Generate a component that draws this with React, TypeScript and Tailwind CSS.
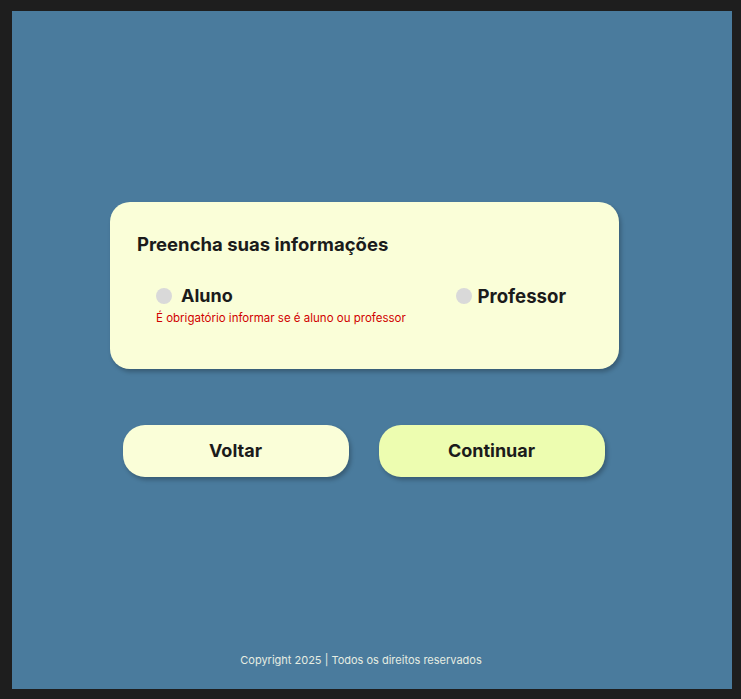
import { useState } from "react";

type Role = "aluno" | "professor" | null;

const font = { fontFamily: "Inter, 'Noto Sans', sans-serif" };

function Radio({ label, checked, onClick, gap, size }: { label: string; checked: boolean; onClick(): void; gap: string; size: string }) {
	return (
		<button type="button" onClick={onClick} className={`flex items-center ${gap}`}>
			<span
				className={`block h-4 w-4 rounded-full ${checked ? "bg-[#4a7b9d]" : "bg-[#d9d9d9]"}`}
			/>
			<span className={`${size} leading-7 font-bold text-[#1b1b1b]`}>{label}</span>
		</button>
	);
}

export default function App() {
	const [role, setRole] = useState<Role>(null);

	return (
		<div className="h-[699px] w-[741px] bg-[#1e1e1e] pt-[11px] pl-[12px] pr-[9px] pb-[10px]" style={font}>
			<div className="flex h-full flex-col bg-[#4a7b9d] pr-[15px]">
				<div className="mt-[191px] flex flex-col items-center">
					<section className="w-[509px] rounded-[20px] bg-[#fafed8] pt-[28px] pb-[43px] pl-[27px] shadow-[2px_3px_4px_rgba(0,0,0,0.25)]">
						<h1 className="text-[18.5px] leading-7 font-bold text-[#1b1b1b]">Preencha suas informações</h1>
						<div className="mt-[24px] flex justify-between pl-[19px] pr-[53px]">
							<div className="flex flex-col">
								<Radio label="Aluno" size="text-lg" gap="gap-[9px]" checked={role === "aluno"} onClick={() => setRole("aluno")} />
								{role === null ? (
									<p className="text-[11.5px] leading-4 text-[#d10000]">É obrigatório informar se é aluno ou professor</p>
								) : null}
							</div>
							<div className="self-start">
								<Radio label="Professor" size="text-[18.6px]" gap="gap-[6px]" checked={role === "professor"} onClick={() => setRole("professor")} />
							</div>
						</div>
					</section>

					<div className="mt-[56px] mr-[2px] flex gap-[30px]">
						<button
							type="button"
							className="h-[52px] w-[226px] rounded-[22px] bg-[#fafed8] text-lg font-bold text-[#1b1b1b] shadow-[2px_3px_4px_rgba(0,0,0,0.25)]"
						>
							Voltar
						</button>
						<button
							type="button"
							className="h-[52px] w-[226px] rounded-[22px] bg-[#edfdb0] text-lg font-bold text-[#1b1b1b] shadow-[2px_3px_4px_rgba(0,0,0,0.25)]"
						>
							Continuar
						</button>
					</div>
				</div>

				<div className="flex-1" />

				<footer className="pb-[21px] pr-[7px] text-center text-[11px] leading-4 text-[#e6ede2]">
					Copyright 2025 | Todos os direitos reservados
				</footer>
			</div>
		</div>
	);
}
